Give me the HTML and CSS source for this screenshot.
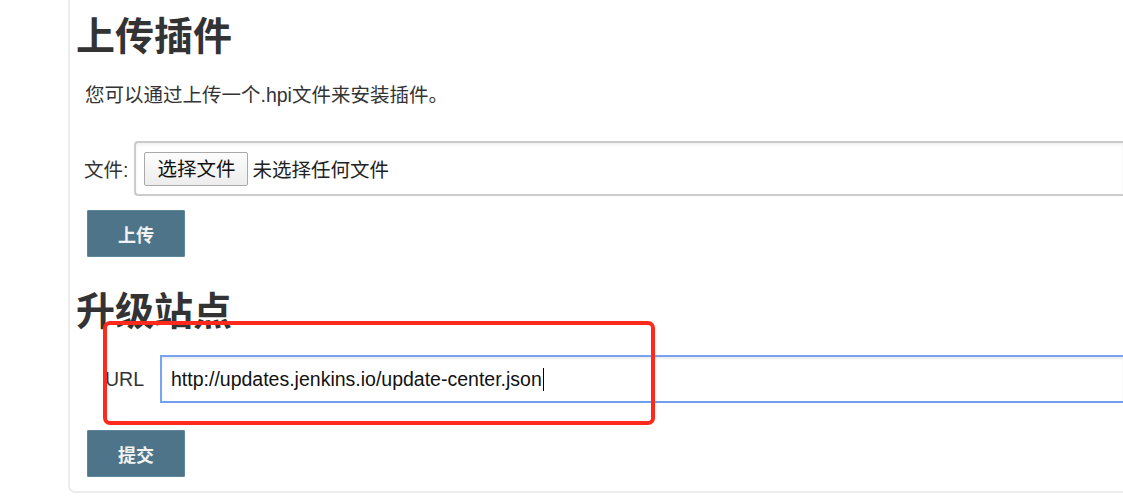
FILE: index.html
```html
<!DOCTYPE html>
<html lang="zh-CN">
<head>
    <meta charset="UTF-8">
    <meta name="viewport" content="width=device-width, initial-scale=1.0">
    <title>插件管理 - 高级</title>
    <link rel="stylesheet" href="styles.css">
</head>
<body>
    <div class="panel">
        <h1>上传插件</h1>
        <p class="desc">您可以通过上传一个.hpi文件来安装插件。</p>
        <form class="upload-form">
            <div class="field file-field">
                <label>文件:</label>
                <div class="file-box">
                    <span class="file-btn">选择文件</span>
                    <span class="file-name">未选择任何文件</span>
                </div>
            </div>
            <button type="button" class="submit-btn">上传</button>
        </form>

        <h1 class="site-title">升级站点</h1>
        <form class="site-form">
            <div class="field url-field">
                <label for="siteUrl">URL</label>
                <div class="url-box">
                    <span class="url-text">http://updates.jenkins.io/update-center.json</span><span class="caret"></span>
                </div>
            </div>
            <button type="button" class="submit-btn">提交</button>
        </form>

        <div class="mark"></div>
    </div>
</body>
</html>
```

FILE: styles.css
```css
html, body {
    overflow: hidden;
}
body {
    margin: 0;
    background: #fff;
    font-family: "Liberation Sans", "Noto Sans CJK SC", sans-serif;
    font-size: 19.5px;
    color: #333;
}
.panel {
    position: relative;
    margin-left: 68px;
    padding: 11px 0 14px 6px;
    border: 2px solid #ececec;
    border-top: none;
    border-right: none;
    border-bottom-left-radius: 7px;
}
h1 {
    margin: 0;
    font-family: "Noto Sans CJK SC", sans-serif;
    font-size: 39px;
    line-height: 44px;
    font-weight: bold;
    color: #333;
}
.site-title {
    margin-top: 29px;
}
.desc {
    margin: 27px 0 0 9px;
    line-height: 26px;
}
.upload-form {
    margin-top: 33px;
}
.field {
    display: flex;
    align-items: center;
}
.file-field {
    padding-left: 8px;
    gap: 6px;
}
.file-box {
    flex: 1;
    display: flex;
    align-items: center;
    gap: 4px;
    height: 51px;
    padding-left: 8px;
    border: 2px solid #cbcbcb;
    border-right: none;
    border-radius: 4px 0 0 4px;
    box-shadow: inset 0 2px 3px rgba(0, 0, 0, 0.06);
}
.file-btn {
    height: 32px;
    line-height: 32px;
    padding: 0 12px;
    border: 1px solid #a9a9a9;
    border-radius: 2px;
    background: linear-gradient(#fdfdfd, #ededed);
    color: #111;
}
.file-name {
    color: #222;
}
.submit-btn {
    display: block;
    width: 98px;
    height: 47px;
    margin: 14px 0 0 11px;
    padding: 0;
    background: #4d7489;
    border: 1px solid #5d879c;
    border-radius: 1px;
    color: #f2f2f2;
    font-family: "Noto Sans CJK SC", sans-serif;
    font-size: 18px;
    font-weight: bold;
    cursor: pointer;
}
.site-form {
    margin-top: 25px;
}
.site-form .submit-btn {
    margin-top: 27px;
}
.url-field {
    padding-left: 29px;
    gap: 16px;
}
.url-box {
    flex: 1;
    display: flex;
    align-items: center;
    height: 44px;
    padding-left: 9px;
    border: 2px solid #76a4ee;
    border-right: none;
    border-bottom-color: #6f9ff0;
    box-shadow: inset 0 2px 2px rgba(0, 0, 0, 0.07);
    color: #111;
}
.caret {
    display: inline-block;
    width: 1px;
    height: 23px;
    margin-left: 1px;
    background: #000;
}
.mark {
    position: absolute;
    left: 33px;
    top: 321px;
    width: 544px;
    height: 96px;
    border: 4px solid #ff2a1c;
    border-radius: 7px;
}
```
